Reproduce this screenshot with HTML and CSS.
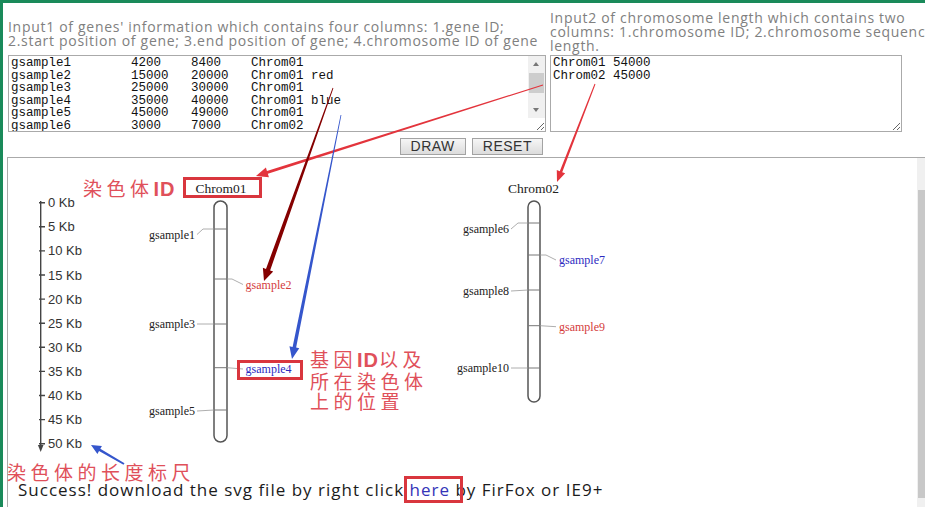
FILE: index.html
```html
<!DOCTYPE html>
<html>
<head>
  <meta charset="UTF-8" />
  <title>Chromosome Gene Map</title>
  <link rel="stylesheet" href="styles.css">
</head>
<body>
  <div class="page">
    <div class="inputs">
      <label class="hint" for="genes">Input1 of genes' information which contains four columns: 1.gene ID;<br>2.start position of gene; 3.end position of gene; 4.chromosome ID of gene</label>
      <label class="hint" for="chroms">Input2 of chromosome length which contains two<br>columns: 1.chromosome ID; 2.chromosome sequence<br>length.</label>
      <div class="field">
        <textarea id="genes" class="data gene-data" spellcheck="false">gsample1        4200    8400    Chrom01
gsample2        15000   20000   Chrom01 red
gsample3        25000   30000   Chrom01
gsample4        35000   40000   Chrom01 blue
gsample5        45000   49000   Chrom01
gsample6        3000    7000    Chrom02
gsample7        10000   15000   Chrom02 blue
gsample8        20000   22000   Chrom02
gsample9        25000   28000   Chrom02 red
gsample10       35000   38000   Chrom02</textarea>
        <div class="vbar field-bar">
          <span class="step up"></span>
          <span class="thumb"></span>
          <span class="step down"></span>
        </div>
      </div>
      <div class="field">
        <textarea id="chroms" class="data chrom-data" spellcheck="false">Chrom01 54000
Chrom02 45000</textarea>
      </div>
      <div class="actions">
        <button type="button">DRAW</button>
        <button type="reset">RESET</button>
      </div>
    </div>

    <div class="result">
      <div class="canvas">
        <svg class="map" width="900" height="322" viewBox="8 158 900 322">
          <!-- length ruler, 5 Kb per tick -->
          <g class="ruler">
            <line x1="40.7" y1="201" x2="40.7" y2="449" />
            <path class="ruler-tip" d="M37.9 445 L40.7 452 L43.5 445 Z" />
            <path d="M39 202.7h6 M39 226.8h6 M39 250.9h6 M39 275h6 M39 299.1h6 M39 323.2h6 M39 347.3h6 M39 371.4h6 M39 395.5h6 M39 419.6h6 M39 443.7h6" />
            <text x="48" y="207.2">0 Kb</text>
            <text x="48" y="231.3">5 Kb</text>
            <text x="48" y="255.4">10 Kb</text>
            <text x="48" y="279.5">15 Kb</text>
            <text x="48" y="303.6">20 Kb</text>
            <text x="48" y="327.7">25 Kb</text>
            <text x="48" y="351.8">30 Kb</text>
            <text x="48" y="375.9">35 Kb</text>
            <text x="48" y="400">40 Kb</text>
            <text x="48" y="424.1">45 Kb</text>
            <text x="48" y="448.2">50 Kb</text>
          </g>

          <!-- Chrom01 -->
          <text class="chrom-name" x="221" y="192.5">Chrom01</text>
          <rect class="chrom" x="214" y="201" width="13" height="241" rx="6.5" />
          <path class="tick" d="M214 229h13 M214 279h13 M214 324h13 M214 367.7h13 M214 410h13" />
          <polyline class="leader" points="197,234.5 203,229 214,229" />
          <polyline class="leader" points="227,279 232,279 243,284.5" />
          <polyline class="leader" points="197,324 214,324" />
          <polyline class="leader" points="227,367.7 243,369" />
          <polyline class="leader" points="197,411 214,410" />
          <text class="gene left" x="195" y="239">gsample1</text>
          <text class="gene red" x="245.6" y="288.7">gsample2</text>
          <text class="gene left" x="195" y="328">gsample3</text>
          <text class="gene blue" x="245.6" y="373">gsample4</text>
          <text class="gene left" x="195" y="415">gsample5</text>

          <!-- Chrom02 -->
          <text class="chrom-name" x="533.5" y="192.5">Chrom02</text>
          <rect class="chrom" x="528" y="201" width="12" height="201" rx="6" />
          <path class="tick" d="M528 223h12 M528 255h12 M528 290h12 M528 325.7h12 M528 368h12" />
          <polyline class="leader" points="511,229 518,223 528,223" />
          <polyline class="leader" points="540,255 546,255 556,260" />
          <polyline class="leader" points="511,291 528,290" />
          <polyline class="leader" points="540,325.7 556,326.7" />
          <polyline class="leader" points="511,368 528,368" />
          <text class="gene left" x="509" y="233">gsample6</text>
          <text class="gene blue" x="559" y="264">gsample7</text>
          <text class="gene left" x="509" y="295">gsample8</text>
          <text class="gene red" x="559" y="330.7">gsample9</text>
          <text class="gene left" x="509" y="372">gsample10</text>
        </svg>
        <p class="status">Success! download the svg file by right click <a href="#">here</a> by FirFox or IE9+</p>
      </div>
      <div class="vbar page-bar">
        <span class="thumb"></span>
      </div>
    </div>
  </div>

  <!-- annotations laid over the screenshot -->
  <div class="notes">
    <svg class="marks" width="925" height="507">
      <rect class="box" x="184.5" y="178.5" width="76" height="18" />
      <rect class="box" x="238.5" y="361.5" width="63" height="17" />
      <rect class="box" x="405.5" y="477.5" width="56" height="24" />

      <polygon class="arrow red" points="542.85,84.52 266.95,170.97 265.9,167.6 256,176 268.9,177.2 267.85,173.83 543.15,85.48" />
      <polygon class="arrow red" points="594.53,83.82 559.77,171.27 556.78,170.11 557,182 565.18,173.37 562.19,172.21 595.47,84.18" />
      <polygon class="arrow dark" points="332.62,87.87 265.97,268.96 262.86,267.85 264,281 273.22,271.55 270.11,270.44 333.38,88.13" />
      <polygon class="arrow blue" points="340.61,114.92 292.6,346.89 289.46,346.26 292,359 299.26,348.22 296.13,347.59 341.39,115.08" />
      <polygon class="arrow blue" points="124.5,463.13 100.32,448.86 101.92,446.09 91,445 97.42,453.89 99.02,451.12 123.5,464.87" />
    </svg>
    <div class="note note-id">染色体<b>ID</b></div>
    <div class="note note-gene">基因<b>ID</b>以及<br>所在染色体<br>上的位置</div>
    <div class="note note-ruler">染色体的长度标尺</div>
  </div>
</body>
</html>
```

FILE: styles.css
```css
html, body {
  margin: 0;
  overflow: hidden;
  background: #fff;
}
.page {
  width: 940px;
  border-top: 3px solid #1a8a5a;
  border-left: 3px solid #1a8a5a;
  padding: 8px 0 0 4px;
}
.inputs {
  display: grid;
  grid-template-columns: 538px 390px;
  column-gap: 4px;
  row-gap: 2px;
  align-items: center;
  margin-left: 1px;
}
.hint {
  display: block;
  font-family: "Open Sans", sans-serif;
  font-size: 14px;
  line-height: 14px;
  letter-spacing: 0.7px;
  color: #808080;
  white-space: nowrap;
}
.hint:first-child {
  padding-top: 3px;
}
.field {
  position: relative;
  align-self: start;
}
.data {
  display: block;
  box-sizing: border-box;
  height: 77px;
  margin: 0;
  padding: 1px 2px;
  border: 1px solid #aaa;
  font-family: "Liberation Mono", monospace;
  font-size: 12.5px;
  line-height: 12.5px;
  color: #111;
}
.gene-data {
  width: 538px;
  padding-right: 20px;
  overflow: hidden;
}
.chrom-data {
  width: 352px;
}

/* classic scrollbars, drawn by hand */
.vbar {
  display: flex;
  flex-direction: column;
  align-items: center;
  width: 17px;
  background: #f0f0f0;
}
.vbar .thumb {
  width: 15px;
  background: #cdcdcd;
}
.field-bar {
  position: absolute;
  right: 1px;
  top: 1px;
  bottom: 14px;
}
.field-bar .thumb {
  height: 20px;
  margin-top: 2px;
}
.step {
  height: 15px;
  width: 17px;
  position: relative;
}
.step::after {
  content: "";
  position: absolute;
  left: 5px;
  border-left: 3.5px solid transparent;
  border-right: 3.5px solid transparent;
}
.step.up::after {
  top: 6px;
  border-bottom: 4px solid #777;
}
.step.down {
  margin-top: auto;
}
.step.down::after {
  top: 5px;
  border-top: 4px solid #777;
}
.page-bar {
  padding-top: 32px;
}
.page-bar .thumb {
  height: 308px;
  background: #c8c8c8;
}

.actions {
  grid-column: 1;
  justify-self: end;
  display: flex;
  gap: 6px;
  margin: 4px 3px 0 0;
}
.actions button {
  height: 17px;
  margin: 0;
  padding: 0 10px;
  border: 1px solid #a3a3a3;
  background: linear-gradient(#f6f6f6, #dcdcdc);
  font-family: "Liberation Sans", sans-serif;
  font-size: 14px;
  line-height: 15px;
  letter-spacing: 0.5px;
  color: #333;
}
.result {
  display: flex;
  box-sizing: border-box;
  width: 927px;
  height: 350px;
  margin-top: 2px;
  border-top: 1px solid #aaa;
  border-left: 1px solid #aaa;
}
.canvas {
  flex: 1;
}
.map {
  display: block;
}
.ruler line,
.ruler path {
  stroke: #444;
  stroke-width: 1.4;
}
.ruler .ruler-tip {
  fill: #444;
  stroke: none;
}
.ruler text {
  font-family: "Liberation Sans", sans-serif;
  font-size: 13px;
  fill: #333;
}
.chrom {
  fill: #fff;
  stroke: #555;
  stroke-width: 1.5;
}
.tick {
  stroke: #777;
  stroke-width: 1;
}
.leader {
  fill: none;
  stroke: #999;
  stroke-width: 0.8;
}
.chrom-name {
  font-family: "Liberation Serif", serif;
  font-size: 13.5px;
  text-anchor: middle;
  fill: #222;
}
.gene {
  font-family: "Liberation Serif", serif;
  font-size: 12px;
  fill: #222;
}
.gene.left {
  text-anchor: end;
}
.gene.red {
  fill: #d43c3c;
}
.gene.blue {
  fill: #2b2bbf;
}
.status {
  margin: 0;
  padding-left: 10px;
  font-family: "Open Sans", sans-serif;
  font-size: 17px;
  line-height: 20px;
  letter-spacing: 1px;
  color: #1b1b1b;
  white-space: nowrap;
}
.status a {
  color: #3434b8;
  text-decoration: none;
}
.notes {
  position: absolute;
  left: 0;
  top: 0;
  width: 925px;
  height: 507px;
  pointer-events: none;
}
.marks {
  position: absolute;
  left: 0;
  top: 0;
}
.box {
  fill: none;
  stroke: #d9363e;
  stroke-width: 3;
}
.arrow.red {
  fill: #e3343c;
}
.arrow.dark {
  fill: #850000;
}
.arrow.blue {
  fill: #3556cc;
}
.note {
  position: absolute;
  font-family: "Noto Sans CJK SC", sans-serif;
  font-size: 19px;
  line-height: 20.5px;
  letter-spacing: 4.5px;
  color: #e0505a;
  white-space: nowrap;
}
.note b {
  font-family: "Liberation Sans", sans-serif;
  font-size: 20px;
  letter-spacing: 1px;
}
.note-id {
  left: 83px;
  top: 178px;
}
.note-gene {
  left: 310px;
  top: 349px;
}
.note-ruler {
  left: 7px;
  top: 462px;
}
```
